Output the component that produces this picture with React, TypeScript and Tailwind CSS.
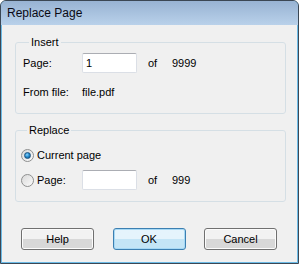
import React from "react"

function TextBox({ value }: { value?: string }) {
  return (
    <div className="w-[55px] h-[20px] bg-white border border-[#dbdfe6] border-t-[#abadb3] rounded-[2px] flex items-center pl-[3px]">
      {value}
    </div>
  )
}

function Radio({ checked }: { checked?: boolean }) {
  return (
    <span className="w-[13px] h-[13px] rounded-full border border-[#8e8f8f] bg-gradient-to-br from-[#d9d9d9] to-[#fbfbfb] flex items-center justify-center shrink-0">
      {checked && (
        <span className="w-[7px] h-[7px] rounded-full bg-[radial-gradient(circle_at_40%_35%,#8fd6ff_0%,#2a8fd0_45%,#0b4f86_100%)] border border-[#1c5380]" />
      )}
    </span>
  )
}

function Btn({ label, primary }: { label: string; primary?: boolean }) {
  return (
    <button
      className={
        "w-[73px] h-[22px] rounded-[3px] border text-[11px] leading-none text-black " +
        (primary
          ? "border-[#3c7fb1] bg-gradient-to-b from-[#e5f4fc] from-50% to-[#c4e5f6] to-50% shadow-[inset_0_0_0_1px_#a7d9f5]"
          : "border-[#707070] bg-gradient-to-b from-[#f2f2f2] from-50% to-[#d8d8d8] to-50% shadow-[inset_0_0_0_1px_#fcfcfc]")
      }
    >
      {label}
    </button>
  )
}

export default function App() {
  return (
    <div className="w-[299px] h-[264px] flex flex-col border border-[#3b4754] rounded-t-[6px] overflow-hidden bg-[#6cbbe6] font-['Liberation_Sans',Arial,sans-serif] text-[11px] text-black">
      {/* Title bar */}
      <div className="h-[24px] shrink-0 bg-gradient-to-b from-[#98b3d3] to-[#b9d1ea] flex items-center pl-[6px] text-[12px] text-[#0a0a14]">
        Replace Page
      </div>

      {/* Body */}
      <div className="flex-1 mx-[1px] mb-[1px] bg-[#f0f0f0] flex flex-col">
        <fieldset className="mt-[11px] ml-[13px] w-[271px] border border-[#d5dfe5] rounded-[3px] pl-[7px] pt-[4px] pb-[11px]">
          <legend className="ml-[6px] px-[2px] leading-[13px]">Insert</legend>
          <div className="h-[20px] flex items-center">
            <span className="w-[59px]">Page:</span>
            <TextBox value="1" />
            <span className="ml-[11px] w-[24px]">of</span>
            <span>9999</span>
          </div>
          <div className="h-[20px] mt-[9px] flex items-center">
            <span className="w-[59px]">From file:</span>
            <span>file.pdf</span>
          </div>
        </fieldset>

        <fieldset className="mt-[10px] ml-[13px] w-[271px] border border-[#d5dfe5] rounded-[3px] pl-[5px] pt-[8px] pb-[11px]">
          <legend className="ml-[6px] px-[2px] leading-[13px]">Replace</legend>
          <div className="h-[20px] flex items-center">
            <Radio checked />
            <span className="ml-[3px]">Current page</span>
          </div>
          <div className="h-[20px] mt-[5px] flex items-center">
            <Radio />
            <span className="ml-[3px] w-[45px]">Page:</span>
            <TextBox />
            <span className="ml-[11px] w-[24px]">of</span>
            <span>999</span>
          </div>
        </fieldset>

        <div className="mt-[26px] pl-[19px] pr-[20px] flex justify-between">
          <Btn label="Help" />
          <Btn label="OK" primary />
          <Btn label="Cancel" />
        </div>
      </div>
    </div>
  )
}
